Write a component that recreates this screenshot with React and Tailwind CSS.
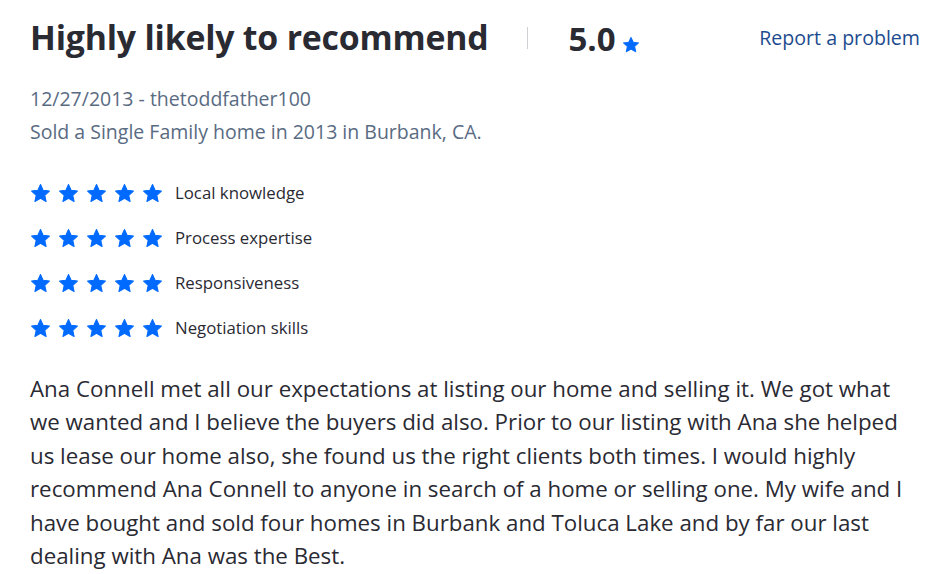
const categories = ['Local knowledge', 'Process expertise', 'Responsiveness', 'Negotiation skills']

function Star({ className }) {
  return (
    <svg viewBox="0 0 24 24" className={className} fill="currentColor">
      <path d="M12 1.8l3.1 6.6 7.1.8-5.3 4.9 1.5 7.1L12 17.6l-6.4 3.6 1.5-7.1-5.3-4.9 7.1-.8z" strokeLinejoin="round" stroke="currentColor" strokeWidth="1.2" />
    </svg>
  )
}

export default function App() {
  return (
    <div className="w-[936px] h-[574px] bg-white overflow-hidden px-[30px] pt-[16px] text-[#2a2a33]" style={{ fontFamily: "'Open Sans', sans-serif" }}>
      <div className="flex items-center h-[44px]">
        <h1 className="text-[33.8px] font-bold leading-none tracking-[-0.2px]">Highly likely to recommend</h1>
        <div className="w-px h-[22px] bg-[#d1d1d5] ml-[39px]" />
        <div className="ml-[40px] flex items-end">
          <span className="text-[33px] font-bold leading-none">5.0</span>
          <Star className="w-[18px] h-[18px] text-[#006aff] ml-[6px] mb-[1px]" />
        </div>
        <a className="ml-auto text-[19.6px] text-[#1d4b8f] -mr-[14px]">Report a problem</a>
      </div>
      <div className="mt-[22px] text-[19.5px] leading-[33px] text-[#596b82]">
        <div>12/27/2013 - thetoddfather100</div>
        <div>Sold a Single Family home in 2013 in Burbank, CA.</div>
      </div>
      <div className="mt-[34px] flex flex-col gap-[23px]">
        {categories.map((c) => (
          <div key={c} className="flex items-center h-[22px]">
            <div className="flex gap-[7px] text-[#006aff]">
              {[0, 1, 2, 3, 4].map((i) => (
                <Star key={i} className="w-[21px] h-[21px]" />
              ))}
            </div>
            <span className="ml-[12px] text-[16.8px] text-[#2a2a33]">{c}</span>
          </div>
        ))}
      </div>
      <p className="mt-[33px] text-[22.3px] leading-[33.4px]">
        Ana Connell met all our expectations at listing our home and selling it. We got what we wanted and I believe the buyers did also. Prior to our listing with Ana she helped us lease our home also, she found us the right clients both times. I would highly recommend Ana Connell to anyone in search of a home or selling one. My wife and I have bought and sold four homes in Burbank and Toluca Lake and by far our last dealing with Ana was the Best.
      </p>
    </div>
  )
}
